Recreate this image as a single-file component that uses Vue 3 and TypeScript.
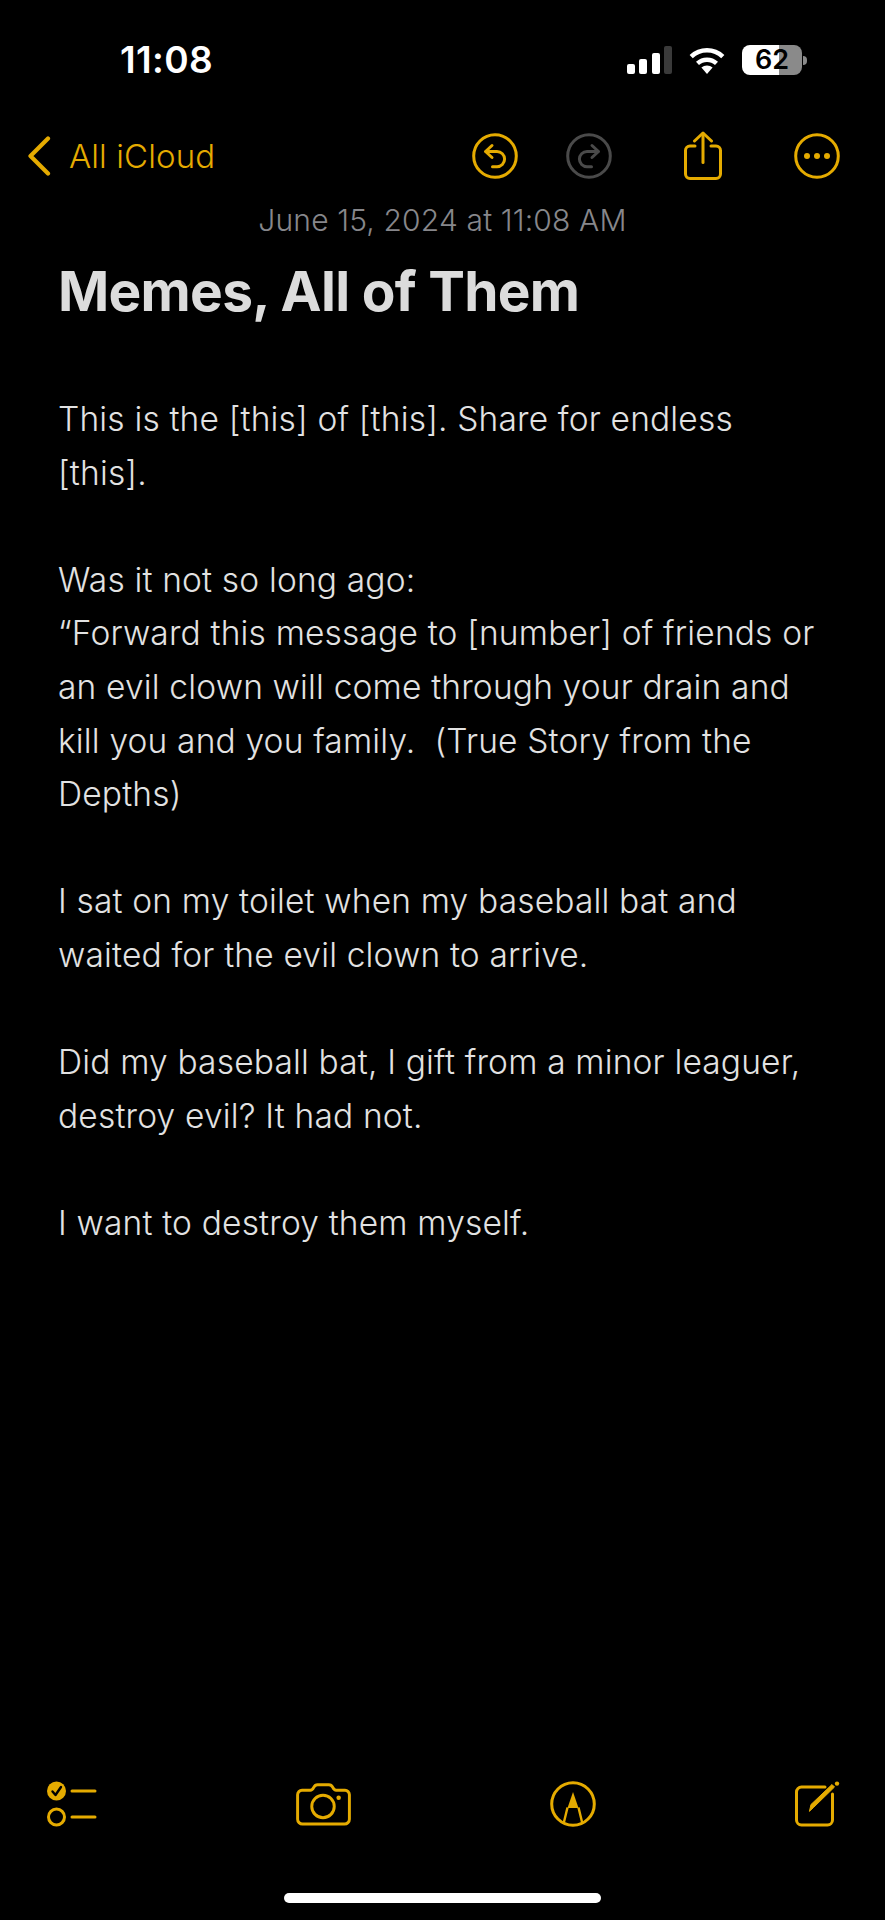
<script setup lang="ts">
const paragraphs: string[][] = [
  ['This is the [this] of [this]. Share for endless', '[this].'],
  [
    'Was it not so long ago:',
    '“Forward this message to [number] of friends or',
    'an evil clown will come through your drain and',
    'kill you and you family.  (True Story from the',
    'Depths)',
  ],
  ['I sat on my toilet when my baseball bat and', 'waited for the evil clown to arrive.'],
  ['Did my baseball bat, I gift from a minor leaguer,', 'destroy evil? It had not.'],
  ['I want to destroy them myself.'],
]
</script>

<template>
  <div class="page">
    <div class="status">
      <span class="time">11:08</span>
      <div class="status-icons">
        <div class="signal">
          <i class="b1"></i><i class="b2"></i><i class="b3"></i><i class="b4"></i>
        </div>
        <svg class="wifi" width="38" height="27" viewBox="0 0 38 27">
          <path d="M19 27 L13.4 20.6 A8.5 8.5 0 0 1 24.6 20.6 Z" fill="#fff" />
          <path d="M9.5 16.4 A14 14 0 0 1 28.5 16.4" fill="none" stroke="#fff" stroke-width="4.4" />
          <path d="M3.2 9.6 A23 23 0 0 1 34.8 9.6" fill="none" stroke="#fff" stroke-width="4.6" />
        </svg>
        <div class="battery">
          <div class="battery-body"><span>62</span></div>
          <div class="battery-tip"></div>
        </div>
      </div>
    </div>

    <div class="nav">
      <div class="back">
        <svg width="24" height="40" viewBox="0 0 24 40">
          <path d="M21 2.5 L3.5 20 L21 37.5" fill="none" stroke="#e5ab00" stroke-width="4.2" stroke-linecap="round" stroke-linejoin="round" />
        </svg>
        <span>All iCloud</span>
      </div>
      <div class="actions">
        <div class="undo-pair">
          <svg width="46" height="46" viewBox="0 0 46 46" fill="none" stroke="#e5ab00" stroke-width="3" stroke-linecap="round" stroke-linejoin="round">
            <circle cx="23" cy="23" r="21.3" />
            <path d="M20 12.5 L13.5 18.5 L20 24.5" />
            <path d="M14 18.5 H25 A7.6 7.6 0 0 1 25 33.7 H20.5" />
          </svg>
          <svg width="46" height="46" viewBox="0 0 46 46" fill="none" stroke="#4a4a4a" stroke-width="3" stroke-linecap="round" stroke-linejoin="round">
            <circle cx="23" cy="23" r="21.3" />
            <path d="M26 12.5 L32.5 18.5 L26 24.5" />
            <path d="M32 18.5 H21 A7.6 7.6 0 0 0 21 33.7 H25.5" />
          </svg>
        </div>
        <svg class="share" width="40" height="50" viewBox="0 0 40 50" fill="none" stroke="#e5ab00" stroke-width="3" stroke-linecap="round" stroke-linejoin="round">
          <path d="M12 15 H7 A4.5 4.5 0 0 0 2.5 19.5 V43 A4.5 4.5 0 0 0 7 47.5 H33 A4.5 4.5 0 0 0 37.5 43 V19.5 A4.5 4.5 0 0 0 33 15 H28" />
          <path d="M20 31.5 V2.5" />
          <path d="M11.5 10 L20 2 L28.5 10" />
        </svg>
        <svg width="46" height="46" viewBox="0 0 46 46" fill="none" stroke="#e5ab00" stroke-width="3">
          <circle cx="23" cy="23" r="21.3" />
          <circle cx="13" cy="23" r="3" fill="#e5ab00" stroke="none" />
          <circle cx="23" cy="23" r="3" fill="#e5ab00" stroke="none" />
          <circle cx="33" cy="23" r="3" fill="#e5ab00" stroke="none" />
        </svg>
      </div>
    </div>

    <div class="date">June 15, 2024 at 11:08 AM</div>
    <h1 class="title">Memes, All of Them</h1>

    <div class="note">
      <p v-for="(lines, i) in paragraphs" :key="i">
        <span v-for="line in lines" :key="line" class="line">{{ line }}</span>
      </p>
    </div>

    <div class="toolbar">
      <svg width="50" height="46" viewBox="0 0 50 46" fill="none" stroke="#e5ab00" stroke-width="3" stroke-linecap="round">
        <circle cx="9.5" cy="10" r="9.5" fill="#e5ab00" stroke="none" />
        <path d="M5.5 10.5 L8.5 14 L14 6" stroke="#000" stroke-width="2.4" stroke-linejoin="round" />
        <circle cx="9.5" cy="36" r="8" />
        <path d="M25 10 H48" />
        <path d="M25 36 H48" />
      </svg>
      <svg width="55" height="43" viewBox="0 0 56 44" fill="none" stroke="#e5ab00" stroke-width="3" stroke-linejoin="round">
        <path d="M6 7.5 H14.5 C16.5 7.5 17 6.5 18 4.5 C19 2.5 20 1.8 22 1.8 H33.5 C35.5 1.8 36.5 2.5 37.5 4.5 C38.5 6.5 39 7.5 41 7.5 H50 A4.5 4.5 0 0 1 54.5 12 V37 A5 5 0 0 1 49.5 42 H6.5 A5 5 0 0 1 1.5 37 V12 A4.5 4.5 0 0 1 6 7.5 Z" />
        <circle cx="27.5" cy="24" r="11.5" />
        <circle cx="43.5" cy="15" r="2.3" fill="#e5ab00" stroke="none" />
      </svg>
      <svg width="46" height="46" viewBox="0 0 46 46" fill="none" stroke="#e5ab00" stroke-width="3" stroke-linejoin="round">
        <circle cx="23" cy="23" r="21.3" />
        <path d="M23 11 L28.5 27 H17.5 Z" fill="#e5ab00" stroke="none" />
        <path d="M17.5 26.5 L13.5 43 M28.5 26.5 L32.5 43" stroke-width="2.4" />
      </svg>
      <svg width="46" height="46" viewBox="0 0 46 46" fill="none" stroke="#e5ab00" stroke-width="3" stroke-linecap="round" stroke-linejoin="round">
        <path d="M30 6 H6.5 A5 5 0 0 0 1.5 11 V39 A5 5 0 0 0 6.5 44 H32.5 A5 5 0 0 0 37.5 39 V13" />
        <path d="M14.5 30 L16 23.5 L37 3.5 L39.5 6 L18.5 26.5 Z" fill="#e5ab00" stroke-width="1" />
        <circle cx="42" cy="2.6" r="2.2" fill="#e5ab00" stroke="none" />
      </svg>
    </div>

    <div class="home"></div>
  </div>
</template>

<style scoped>
.page {
  display: flex;
  flex-direction: column;
  height: 1920px;
  box-sizing: border-box;
  background: #000;
  font-family: Inter, "Liberation Sans", sans-serif;
  overflow: hidden;
}

.status {
  display: flex;
  justify-content: space-between;
  align-items: center;
  height: 30px;
  margin-top: 45px;
  padding: 0 78px 0 120px;
}

.time {
  color: #fff;
  font-size: 37px;
  font-weight: 600;
  line-height: 30px;
  letter-spacing: 0.4px;
}

.status-icons {
  display: flex;
  align-items: center;
  gap: 16px;
}

.signal {
  display: flex;
  align-items: flex-end;
  gap: 4.5px;
  height: 28px;
}

.signal i {
  display: block;
  width: 8px;
  border-radius: 2px;
  background: #fff;
}

.b1 { height: 10px; }
.b2 { height: 15px; }
.b3 { height: 21px; }
.signal .b4 { height: 28px; background: #3a3a3a; }

.battery {
  display: flex;
  align-items: center;
  gap: 1px;
}

.battery-body {
  width: 60px;
  height: 30px;
  border-radius: 8px;
  background: linear-gradient(90deg, #fff 0 62%, #8a8a8a 62% 100%);
  text-align: center;
  color: #000;
  font-size: 27px;
  font-weight: 600;
  line-height: 30px;
}

.battery-tip {
  width: 4px;
  height: 9px;
  border-radius: 0 4px 4px 0;
  background: #8a8a8a;
}

.nav {
  display: flex;
  justify-content: space-between;
  align-items: center;
  height: 50px;
  margin-top: 56px;
  padding: 0 45px 0 27px;
}

.back {
  display: flex;
  align-items: center;
  gap: 18px;
  color: #e5ab00;
  font-size: 33px;
  font-weight: 300;
  letter-spacing: 0.1px;
}

.actions {
  display: flex;
  align-items: center;
  gap: 71px;
}

.undo-pair {
  display: flex;
  gap: 48px;
}

.date {
  margin-top: 21px;
  text-align: center;
  color: #87878b;
  font-size: 30px;
  font-weight: 300;
  letter-spacing: 0.15px;
  line-height: 36px;
}

.title {
  margin: 17px 0 0;
  padding-left: 58px;
  color: #dcdcdc;
  font-size: 55px;
  font-weight: 700;
  line-height: 72px;
  letter-spacing: -0.7px;
}

.note {
  margin-top: 66px;
  padding-left: 58px;
  color: #e2e2e2;
  font-size: 33.5px;
  font-weight: 300;
  line-height: 53.6px;
  letter-spacing: 0.17px;
}

.note p {
  margin: 0 0 53.6px;
}

.line {
  display: block;
  white-space: pre;
}

.toolbar {
  display: flex;
  justify-content: space-between;
  align-items: center;
  margin-top: auto;
  padding: 0 44px 0 47px;
}

.home {
  align-self: center;
  width: 317px;
  height: 10px;
  margin: 66px 0 17px;
  border-radius: 5px;
  background: #fff;
}
</style>

<style>
html, body { background: #000; }
</style>
